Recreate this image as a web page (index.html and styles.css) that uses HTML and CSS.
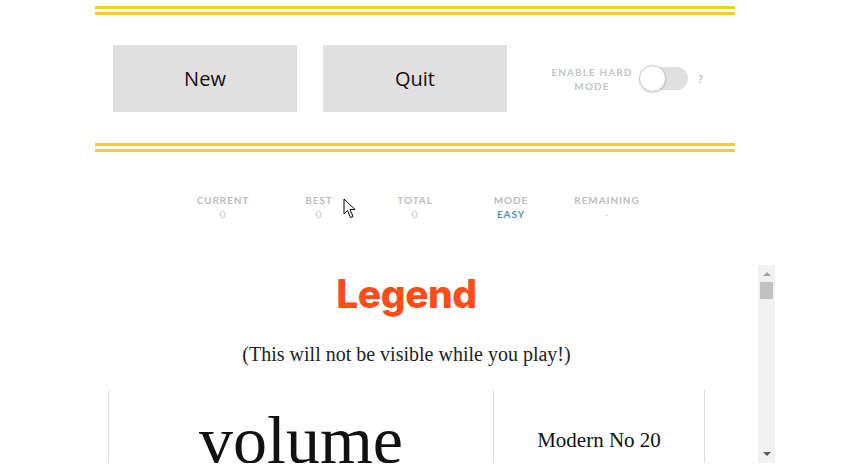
FILE: index.html
```html
<!DOCTYPE html>
<html>
<head>
<meta charset="utf-8">
<link rel="stylesheet" href="styles.css">
</head>
<body>
<div class="page">
  <div class="rule"></div>
  <div class="controls">
    <button class="btn">New</button>
    <button class="btn">Quit</button>
    <div class="hard">
      <div class="hard-label">ENABLE HARD<br>MODE</div>
      <div class="toggle"><span class="knob"></span></div>
      <span class="help">?</span>
    </div>
  </div>
  <div class="rule"></div>
  <div class="stats">
    <div class="stat"><div class="stat-label">CURRENT</div><div class="stat-value">0</div></div>
    <div class="stat"><div class="stat-label">BEST</div><div class="stat-value">0</div></div>
    <div class="stat"><div class="stat-label">TOTAL</div><div class="stat-value">0</div></div>
    <div class="stat"><div class="stat-label">MODE</div><div class="stat-value easy">EASY</div></div>
    <div class="stat"><div class="stat-label">REMAINING</div><div class="stat-value">-</div></div>
  </div>
</div>
<div class="legend-box">
  <div class="legend-content">
    <h1 class="legend-title">Legend</h1>
    <p class="legend-sub">(This will not be visible while you play!)</p>
    <table class="legend-table">
      <tr><td class="word">volume</td><td class="font">Modern No 20</td></tr>
      <tr><td class="word">harbor</td><td class="font">Garamond</td></tr>
      <tr><td class="word">lantern</td><td class="font">Baskerville</td></tr>
      <tr><td class="word">meadow</td><td class="font">Didot</td></tr>
    </table>
  </div>
  <div class="scrollbar">
    <div class="sb-btn"><svg width="8" height="5" viewBox="0 0 8 5"><path d="M0 5 L4 1 L8 5 Z" fill="#a3a3a3"/></svg></div>
    <div class="sb-track"><div class="sb-thumb"></div></div>
    <div class="sb-btn"><svg width="8" height="5" viewBox="0 0 8 5"><path d="M0 0 L8 0 L4 4 Z" fill="#505a6b"/></svg></div>
  </div>
</div>
<svg class="cursor" width="14" height="21" viewBox="0 0 14 21"><path d="M1 1 L1 16 L4.5 12.5 L7.5 19.5 L10 18.5 L7 11.5 L12 11.5 Z" fill="#fff" stroke="#000" stroke-width="1" stroke-linejoin="round"/></svg>
</body>
</html>
```

FILE: styles.css
```css
html, body {
  margin: 0;
  padding: 0;
  background: #fff;
}
body {
  font-family: "Open Sans", "Liberation Sans", sans-serif;
  position: relative;
  height: 470px;
  overflow: hidden;
}
.page {
  width: 640px;
  margin-left: 95px;
  padding-top: 6px;
}
.rule {
  height: 3px;
  border-top: 3px solid #f6cd2e;
  border-bottom: 3px solid #f6cd2e;
}
.controls {
  display: flex;
  align-items: center;
  padding: 30px 0 31px 18px;
  height: 67px;
}
.btn {
  width: 184px;
  height: 67px;
  background: #e0e0e0;
  border: none;
  margin: 0 26px 0 0;
  padding: 0;
  font-family: "Open Sans", "Liberation Sans", sans-serif;
  font-size: 20px;
  color: #111;
  cursor: pointer;
}
.hard {
  display: flex;
  align-items: center;
  margin-left: 13px;
}
.hard-label {
  font-family: "Lato", "Liberation Sans", sans-serif;
  font-weight: 700;
  font-size: 10px;
  letter-spacing: 1.1px;
  line-height: 14px;
  color: #c4c4c4;
  text-align: center;
  width: 92px;
}
.toggle {
  position: relative;
  width: 48px;
  height: 23px;
  background: #e0e0e0;
  border-radius: 12px;
  margin-left: 2px;
}
.knob {
  position: absolute;
  left: -1px;
  top: -2px;
  width: 25px;
  height: 25px;
  border-radius: 50%;
  background: #fff;
  border: 1px solid #c8c8c8;
  box-shadow: 0 1px 2px rgba(0,0,0,0.15);
}
.help {
  font-family: "Lato", "Liberation Sans", sans-serif;
  font-weight: 700;
  font-size: 11px;
  color: #c4c4c4;
  margin-left: 10px;
}
.stats {
  display: flex;
  justify-content: center;
  padding-top: 41px;
}
.stat {
  width: 96px;
  text-align: center;
  font-family: "Lato", "Liberation Sans", sans-serif;
  font-weight: 700;
  font-size: 10px;
  letter-spacing: 0.9px;
  line-height: 14px;
  color: #bdbdbd;
}
.stat-value {
  color: #c4c4c4;
  font-weight: 400;
}
.stat-value.easy {
  color: #4a8fc9;
  font-weight: 700;
}
.legend-box {
  margin: 44px 0 0 55px;
  width: 720px;
  height: 198px;
  display: flex;
}
.legend-content {
  flex: 1;
  overflow: hidden;
}
.scrollbar {
  width: 17px;
  background: #f1f1f1;
  display: flex;
  flex-direction: column;
}
.sb-btn {
  height: 17px;
  display: flex;
  align-items: center;
  justify-content: center;
}
.sb-track {
  flex: 1;
  padding: 0 2px;
}
.sb-thumb {
  height: 17px;
  background: #c1c1c1;
}
.legend-title {
  margin: 7px 0 0;
  text-align: center;
  font-family: "Inter", "Liberation Sans", sans-serif;
  font-weight: 800;
  font-size: 39px;
  line-height: 44px;
  color: #ff4d1a;
  letter-spacing: -0.5px;
}
.legend-sub {
  margin: 26px 0 0;
  text-align: center;
  font-family: "Liberation Serif", serif;
  font-size: 20px;
  line-height: 24px;
  color: #222;
}
.legend-table {
  margin: 24px auto 0;
  width: 597px;
  border-collapse: collapse;
}
.legend-table td {
  border-left: 1px solid #ddd;
  border-right: 1px solid #ddd;
  text-align: center;
  font-family: "Liberation Serif", serif;
  color: #111;
  height: 100px;
  padding: 0;
}
.word {
  width: 384px;
  font-size: 68px;
}
.font {
  font-size: 21px;
}
.cursor {
  position: absolute;
  left: 343px;
  top: 198px;
}
```
